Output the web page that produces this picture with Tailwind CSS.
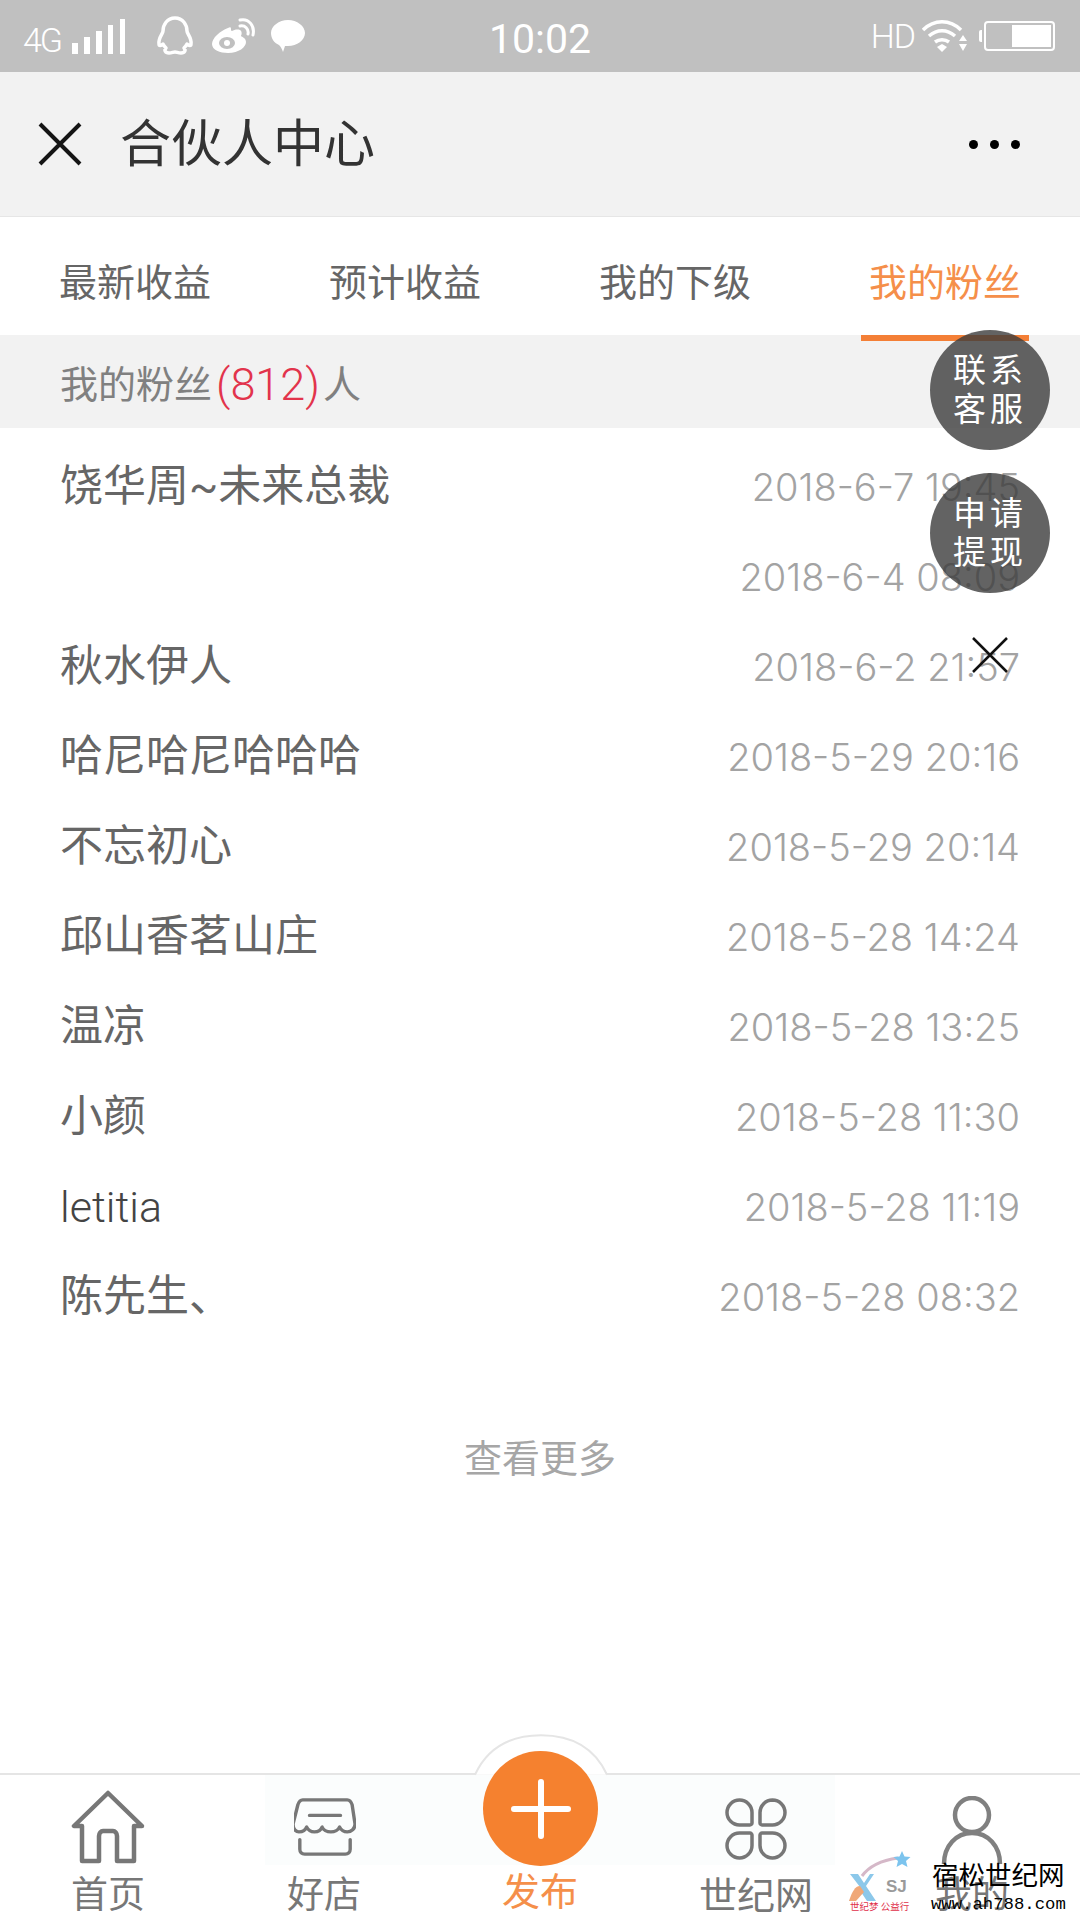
<!DOCTYPE html>
<html lang="zh-CN">
<head>
    <meta charset="UTF-8">
    <meta name="viewport" content="width=device-width, initial-scale=1.0">
    <title>合伙人中心</title>
    <script src="https://cdn.jsdelivr.net/npm/@tailwindcss/browser@4"></script>
</head>
<body class="bg-white">
<div class="relative w-[1080px] h-[1920px] overflow-hidden flex flex-col bg-white font-['Roboto','Noto_Sans_CJK_SC',sans-serif] text-[#666]">

    <!-- status bar -->
    <div class="h-[72px] shrink-0 bg-[#c0c0c0] text-white relative flex items-center justify-between pl-[23px] pr-[25px]">
        <div class="flex items-center">
            <span class="text-[34px] font-light tracking-[-2px] mt-[8px] w-[47px]">4G</span>
            <svg class="w-[56px] h-[36px]" viewBox="0 0 56 36" fill="#fff">
                <rect x="2" y="25" width="6" height="11"/><rect x="14" y="19" width="6" height="17"/><rect x="26" y="13" width="6" height="23"/><rect x="38" y="7" width="5" height="29"/><rect x="50" y="1" width="5" height="35"/>
            </svg>
            <svg class="ml-[30px] w-[38px] h-[40px]" viewBox="0 0 38 40" fill="none" stroke="#fff" stroke-width="3.5" stroke-linejoin="round">
                <path d="M19 2C11 2 7 9 7 15c0 3-5 7-4 13 0 2 2 2 4 0 1 2 2 3 3 4-2 2-1 5 3 5 3 0 4-1 6-1s3 1 6 1c4 0 5-3 3-5 1-1 2-2 3-4 2 2 4 2 4 0 1-6-4-10-4-13 0-6-4-13-12-13z"/>
            </svg>
            <svg class="ml-[17px] w-[44px] h-[36px]" viewBox="0 0 44 36">
                <path fill="#fff" d="M17 10C9 13 1 20 1 26c0 6 8 9 16 9 11 0 18-6 18-11 0-4-4-5-5-6 1-2 1-5-1-6-3-1-6 0-8 1-1 0-1-1-1-2 0-2-1-2-3-1z"/>
                <ellipse cx="16" cy="25" rx="8" ry="6" fill="#c0c0c0"/><circle cx="16" cy="25" r="3" fill="#fff"/>
                <path d="M29 8c5-1 9 3 8 8M29 2c9-2 15 6 13 15" fill="none" stroke="#fff" stroke-width="3" stroke-linecap="round"/>
            </svg>
            <svg class="ml-[16px] w-[34px] h-[32px]" viewBox="0 0 34 32" fill="#fff">
                <path d="M17 0c9 0 17 6 17 13s-8 13-17 13c-1 0-2 0-3 0l-2 6c-1-3-2-5-4-7C3 23 0 18 0 13 0 6 8 0 17 0z"/>
            </svg>
        </div>
        <span class="absolute left-0 right-0 mt-[6px] text-center text-[41px] leading-none">10:02</span>
        <div class="flex items-center">
            <span class="text-[34px] font-light leading-none tracking-[-1px]">HD</span>
            <svg class="ml-[7px] w-[46px] h-[34px]" viewBox="0 0 46 34" fill="none" stroke="#fff" stroke-width="3.5">
                <path d="M1 11c11-11 27-11 38 0M7 17c8-7 18-7 26 0M13 23c4-3 10-3 14 0"/>
                <path d="M15 28l5-3 5 3-5 5z" fill="#fff" stroke="none"/>
                <path d="M37 22l4-6 4 6zM37 25h8l-4 7z" fill="#fff" stroke="none"/>
            </svg>
            <div class="ml-[11px] flex items-center">
                <div class="w-[3px] h-[12px] bg-white rounded-l-[2px] mr-[2px]"></div>
                <div class="w-[71px] h-[30px] border-[2px] border-white rounded-[4px] p-[2px] flex justify-end">
                    <div class="w-[39px] bg-white"></div>
                </div>
            </div>
        </div>
    </div>

    <!-- title bar -->
    <div class="h-[145px] shrink-0 bg-[#f2f2f2] border-b border-[#e6e6e6] flex items-center pl-[38px] pr-[60px]">
        <svg class="w-[44px] h-[44px]" viewBox="0 0 44 44" stroke="#151515" stroke-width="4">
            <path d="M2 2l40 40M42 2L2 42"/>
        </svg>
        <h1 class="ml-[38px] mb-[7px] text-[51px] leading-none text-[#333] font-['Noto_Sans_CJK_SC',sans-serif] font-normal">合伙人中心</h1>
        <div class="ml-auto flex gap-[12px]">
            <span class="w-[9px] h-[9px] rounded-full bg-black"></span>
            <span class="w-[9px] h-[9px] rounded-full bg-black"></span>
            <span class="w-[9px] h-[9px] rounded-full bg-black"></span>
        </div>
    </div>

    <!-- tabs -->
    <div class="h-[118px] shrink-0 pt-[7px] flex justify-between items-center px-[51px] text-[38px] text-[#666] font-['Noto_Sans_CJK_SC',sans-serif]">
        <div class="w-[168px] text-center">最新收益</div>
        <div class="w-[168px] text-center">预计收益</div>
        <div class="w-[168px] text-center">我的下级</div>
        <div class="relative w-[168px] h-full flex items-center justify-center text-[#f58f4a]">
            我的粉丝
            <span class="absolute left-0 right-0 bottom-[-6px] h-[6px] bg-[#f47f36] z-10"></span>
        </div>
    </div>

    <!-- fans count -->
    <div class="h-[93px] shrink-0 bg-[#f2f2f2] pt-[7px] flex items-center pl-[60px] text-[38px] text-[#808080]">
        <span>我的粉丝</span><span class="ml-[4px] text-[45px] font-light text-[#e2344c]">(812)</span><span class="ml-[3px]">人</span>
    </div>

    <!-- list -->
    <ul class="pt-[13px] shrink-0 pl-[60px] pr-[60px] text-[43px]">
        <li class="h-[90px] flex items-center justify-between"><span>饶华周~未来总裁</span><span class="mt-[3px] font-['Inter'] text-[38px] font-light text-[#a3a3a3]">2018-6-7 19:45</span></li>
        <li class="h-[90px] flex items-center justify-end"><span class="mt-[3px] font-['Inter'] text-[38px] font-light text-[#a3a3a3]">2018-6-4 08:09</span></li>
        <li class="h-[90px] flex items-center justify-between"><span>秋水伊人</span><span class="mt-[3px] font-['Inter'] text-[38px] font-light text-[#a3a3a3]">2018-6-2 21:57</span></li>
        <li class="h-[90px] flex items-center justify-between"><span>哈尼哈尼哈哈哈</span><span class="mt-[3px] font-['Inter'] text-[38px] font-light text-[#a3a3a3]">2018-5-29 20:16</span></li>
        <li class="h-[90px] flex items-center justify-between"><span>不忘初心</span><span class="mt-[3px] font-['Inter'] text-[38px] font-light text-[#a3a3a3]">2018-5-29 20:14</span></li>
        <li class="h-[90px] flex items-center justify-between"><span>邱山香茗山庄</span><span class="mt-[3px] font-['Inter'] text-[38px] font-light text-[#a3a3a3]">2018-5-28 14:24</span></li>
        <li class="h-[90px] flex items-center justify-between"><span>温凉</span><span class="mt-[3px] font-['Inter'] text-[38px] font-light text-[#a3a3a3]">2018-5-28 13:25</span></li>
        <li class="h-[90px] flex items-center justify-between"><span>小颜</span><span class="mt-[3px] font-['Inter'] text-[38px] font-light text-[#a3a3a3]">2018-5-28 11:30</span></li>
        <li class="h-[90px] flex items-center justify-between"><span class="mt-[2px] font-light text-[#444]">letitia</span><span class="mt-[3px] font-['Inter'] text-[38px] font-light text-[#a3a3a3]">2018-5-28 11:19</span></li>
        <li class="h-[90px] flex items-center justify-between"><span>陈先生、</span><span class="mt-[3px] font-['Inter'] text-[38px] font-light text-[#a3a3a3]">2018-5-28 08:32</span></li>
    </ul>

    <div class="mt-[90px] text-center text-[38px] leading-[56px] text-[#a6a6a6]">查看更多</div>

    <!-- bottom nav -->
    <nav class="relative mt-auto h-[147px] shrink-0 border-t-[2px] border-[#e5e5e5] pb-[8px]">
        <div class="absolute left-[265px] top-0 w-[570px] h-[90px] bg-[#fbfdfd]"></div>
        <!-- raised arc behind the publish button -->
        <svg class="absolute left-[472px] top-[-42px] w-[138px] h-[44px]" viewBox="0 0 140 44" fill="#fff" stroke="#e5e5e5" stroke-width="2">
            <path d="M3 42C16 14 40 2 70 2s54 12 67 40"/>
        </svg>
        <div class="relative grid grid-cols-5 h-full overflow-hidden text-[37px] text-[#777]">
            <div class="relative flex flex-col items-center">
                <svg class="mt-[15px] w-[74px] h-[74px]" viewBox="0 0 74 74" fill="none" stroke="#777" stroke-width="4.5" stroke-linejoin="round">
                    <path d="M37 3L3 36h8v35h17V46c0-3 2-5 4-5h10c2 0 4 2 4 5v25h17V36h8z"/>
                </svg>
                <span class="absolute top-[96px] leading-[50px]">首页</span>
            </div>
            <div class="relative flex flex-col items-center">
                <svg class="mt-[22px] ml-[2px] w-[62px] h-[60px]" viewBox="0 0 64 60" fill="none" stroke="#777" stroke-width="3.5" stroke-linecap="round" stroke-linejoin="round">
                    <path d="M9 2h46c3 0 4 2 5 5l3 20c0 5-4 8-8 8s-7-3-8-5c-1 3-5 5-9 5s-8-2-9-5c-1 3-4 5-8 5s-7-3-8-5c-1 3-4 5-8 5-3 0-6-3-6-8L4 7c1-3 2-5 5-5z"/>
                    <path d="M16 18h32M6 43v10c0 3 2 5 5 5h42c3 0 5-2 5-5V43"/>
                </svg>
                <span class="absolute top-[96px] leading-[50px]">好店</span>
            </div>
            <div class="relative flex flex-col items-center">
                <span class="absolute top-[92px] leading-[50px] text-[38px] text-[#f58f4a]">发布</span>
            </div>
            <div class="relative flex flex-col items-center">
                <svg class="mt-[23px] w-[62px] h-[62px]" viewBox="0 0 62 62" fill="none" stroke="#777" stroke-width="3.5">
                    <path d="M14.500 2a12.500 12.500 0 0 1 12.500 12.500V25c0 1-1 2-2 2H14.500a12.500 12.500 0 0 1 0-25z"/>
                    <path d="M47.500 2a12.500 12.500 0 0 0-12.500 12.500V25c0 1 1 2 2 2h10.500a12.500 12.500 0 0 0 0-25z"/>
                    <path d="M14.500 60a12.500 12.500 0 0 0 12.500-12.500V37c0-1-1-2-2-2H14.500a12.500 12.500 0 0 0 0 25z"/>
                    <path d="M47.500 60a12.500 12.500 0 0 1-12.500-12.500V37c0-1 1-2 2-2h10.500a12.500 12.500 0 0 1 0 25z"/>
                </svg>
                <span class="absolute top-[96px] leading-[50px] text-[38px]">世纪网</span>
            </div>
            <div class="relative flex flex-col items-center">
                <svg class="mt-[21px] w-[62px] h-[70px]" viewBox="0 0 62 70" fill="none" stroke="#808080" stroke-width="4.5">
                    <circle cx="31" cy="19" r="17"/>
                    <path d="M3 68c0-18 12-31 28-31s28 13 28 31"/>
                </svg>
                <span class="absolute top-[96px] leading-[50px]">我的</span>
            </div>
        </div>
        <!-- publish button -->
        <div class="absolute left-[483px] top-[-24px] w-[115px] h-[115px] rounded-full bg-[#f5812f] flex items-center justify-center">
            <svg class="w-[60px] h-[60px]" viewBox="0 0 60 60" stroke="#fff" stroke-width="6" stroke-linecap="round">
                <path d="M30 3v54M3 30h54"/>
            </svg>
        </div>
    </nav>

    <!-- floating buttons -->
    <div class="absolute left-[930px] top-[330px] w-[120px] h-[120px] rounded-full bg-[#3c3c3c]/80 flex items-center justify-center text-center text-white text-[33px] leading-[39px] tracking-[4px] z-20">联系<br>客服</div>
    <div class="absolute left-[930px] top-[473px] w-[120px] h-[120px] rounded-full bg-[#3c3c3c]/80 flex items-center justify-center text-center text-white text-[33px] leading-[39px] tracking-[4px] z-20">申请<br>提现</div>
    <svg class="absolute left-[972px] top-[637px] w-[36px] h-[36px] z-20" viewBox="0 0 36 36" stroke="#111" stroke-width="2.500">
        <path d="M1 1l34 34M35 1L1 35"/>
    </svg>

    <!-- watermark -->
    <div class="absolute left-[846px] top-[1850px] w-[222px] h-[66px] z-30">
        <svg class="absolute left-0 top-0 w-[80px] h-[66px]" viewBox="0 0 80 66">
            <path d="M4 24h8l6 9 6-9h4l-8 12 10 15h-9l-6-9-8 9H3l11-14z" fill="#8cc8ea"/>
            <path d="M3 51c3-9 6-15 11-15l4 6-8 9z" fill="#f0a878"/>
            <path d="M16 26C24 15 38 10 52 8" fill="none" stroke="#d5b8c8" stroke-width="3"/>
            <path d="M56 1l2.500 5.500 6 .5-4.500 4 1.500 6-5.500-3-5.500 3 1.500-6-4.500-4 6-.5z" fill="#7cc4ee"/>
            <text x="40" y="42" font-family="Liberation Sans" font-weight="700" font-size="17" fill="#9a9a9a">SJ</text>
            <text x="4" y="60" font-family="Noto Sans CJK SC" font-size="9.500" fill="#e0304a">世纪梦 公益行</text>
        </svg>
        <div class="absolute left-[86px] top-[7px] text-[26.500px] leading-[34px] text-black font-['Noto_Sans_CJK_SC',sans-serif] whitespace-nowrap">宿松世纪网</div>
        <div class="absolute left-[85px] top-[45px] text-[17.300px] leading-[20px] text-black font-['Liberation_Mono',monospace] whitespace-nowrap">www.ah788.com</div>
    </div>
</div>
</body>
</html>
